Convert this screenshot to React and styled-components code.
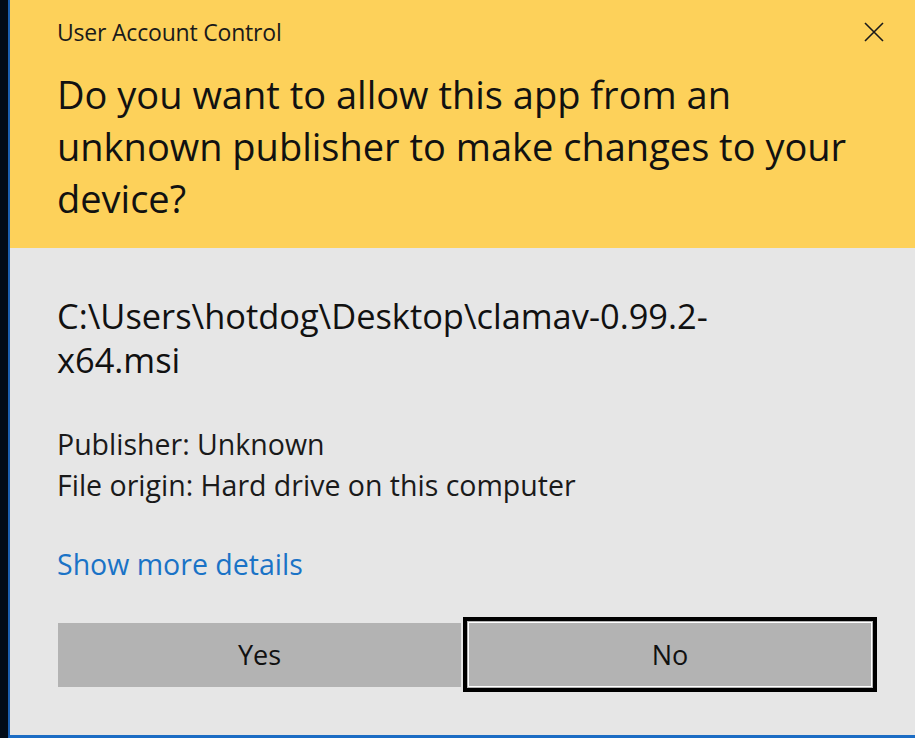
import React from "react";
import styled, { createGlobalStyle } from "styled-components";

const Global = createGlobalStyle`
  html, body { margin: 0; padding: 0; background: #020b18; }
  body { font-family: "Open Sans", "Noto Sans", sans-serif; }
`;

const Screen = styled.div`
  display: flex;
  width: 915px;
  height: 738px;
  background: #020b18;
  overflow: hidden;
`;

const Window = styled.div`
  margin-left: 8px;
  flex: 1;
  display: flex;
  flex-direction: column;
  border-left: 2px solid #1b5fb1;
  border-bottom: 3px solid #1b6cc4;
  background: #e6e6e6;
`;

const Header = styled.div`
  background: #fdd15a;
  height: 248px;
  padding: 0 0 0 47px;
  display: flex;
  flex-direction: column;
  box-sizing: border-box;
`;

const TitleBar = styled.div`
  display: flex;
  align-items: center;
  justify-content: space-between;
  height: 64px;
`;

const Caption = styled.span`
  font-size: 23px;
  color: #1a1a1a;
  letter-spacing: -0.2px;
`;

const CloseButton = styled.button`
  width: 83px;
  height: 64px;
  border: none;
  background: transparent;
  display: flex;
  align-items: center;
  justify-content: center;
  padding: 0;
`;

const Question = styled.h1`
  margin: 4px 0 0 0;
  font-weight: 400;
  font-size: 38px;
  line-height: 52px;
  color: #111;
  max-width: 800px;
`;

const Body = styled.div`
  flex: 1;
  padding: 46px 36px 0 47px;
  display: flex;
  flex-direction: column;
`;

const Path = styled.div`
  font-size: 34.4px;
  line-height: 44px;
  color: #111;
`;

const Details = styled.div`
  margin-top: 42px;
  font-size: 28.5px;
  line-height: 41px;
  color: #1a1a1a;
`;

const MoreLink = styled.a`
  margin-top: 42px;
  font-size: 28.5px;
  line-height: 32px;
  color: #1a73c6;
  text-decoration: none;
  cursor: pointer;
`;

const Buttons = styled.div`
  margin-top: 37px;
  display: grid;
  grid-template-columns: 403px 414px;
  gap: 2px;
  align-items: center;
  margin-left: 1px;
`;

const Button = styled.button`
  height: ${(p) => (p.$focused ? "75px" : "64px")};
  font-family: "Open Sans", "Noto Sans", sans-serif;
  font-size: 27px;
  color: #111;
  background: #b3b3b3;
  border: ${(p) => (p.$focused ? "4px solid #000" : "none")};
  outline: ${(p) => (p.$focused ? "1px solid #fff" : "none")};
  outline-offset: -6px;
  box-sizing: border-box;
  padding: 0;
`;

export default function App() {
  return (
    <>
      <Global />
      <Screen>
        <Window>
          <Header>
            <TitleBar>
              <Caption>User Account Control</Caption>
              <CloseButton aria-label="Close">
                <svg width="20" height="20" viewBox="0 0 20 20">
                  <path d="M1 1 L19 19 M19 1 L1 19" stroke="#1a1a1a" strokeWidth="1.6" fill="none" />
                </svg>
              </CloseButton>
            </TitleBar>
            <Question>
              Do you want to allow this app from an unknown publisher to make changes to your device?
            </Question>
          </Header>
          <Body>
            <Path>C:\Users\hotdog\Desktop\clamav-0.99.2-<br />x64.msi</Path>
            <Details>
              Publisher: Unknown
              <br />
              File origin: Hard drive on this computer
            </Details>
            <MoreLink>Show more details</MoreLink>
            <Buttons>
              <Button>Yes</Button>
              <Button $focused>No</Button>
            </Buttons>
          </Body>
        </Window>
      </Screen>
    </>
  );
}
